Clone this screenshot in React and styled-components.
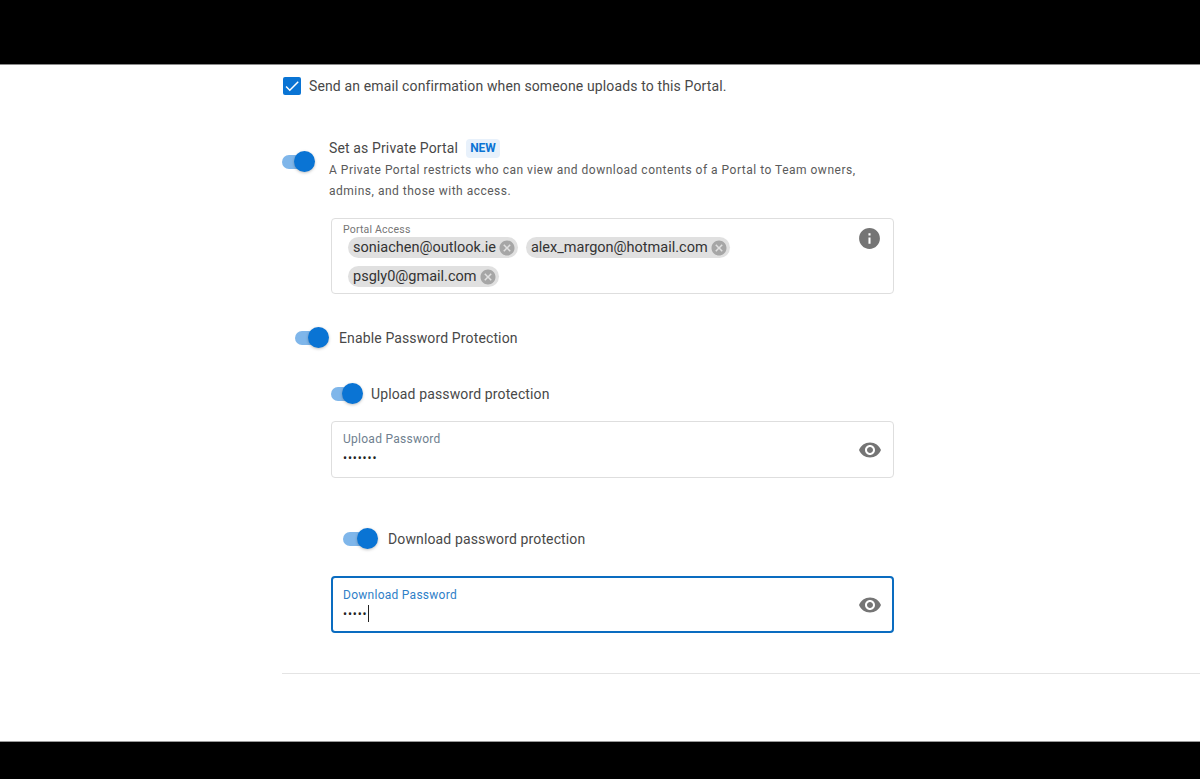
import React from "react";
import styled, { createGlobalStyle } from "styled-components";

const GlobalStyle = createGlobalStyle`
  html, body {
    margin: 0;
    padding: 0;
    background: #000;
    font-family: Roboto, "Liberation Sans", sans-serif;
    overflow: hidden;
  }
`;

const eyePath =
  "M12 4.5C7 4.5 2.73 7.61 1 12c1.73 4.39 6 7.5 11 7.5s9.27-3.11 11-7.5c-1.73-4.39-6-7.5-11-7.5zM12 17c-2.76 0-5-2.24-5-5s2.24-5 5-5 5 2.24 5 5-2.24 5-5 5zm0-8c-1.66 0-3 1.34-3 3s1.34 3 3 3 3-1.34 3-3-1.34-3-3-3z";
const infoPath =
  "M12 2C6.48 2 2 6.48 2 12s4.48 10 10 10 10-4.48 10-10S17.52 2 12 2zm1 15h-2v-6h2v6zm0-8h-2V7h2v2z";
const cancelPath =
  "M12 2C6.47 2 2 6.47 2 12s4.47 10 10 10 10-4.47 10-10S17.53 2 12 2zm5 13.59L15.59 17 12 13.41 8.41 17 7 15.59 10.59 12 7 8.41 8.41 7 12 10.59 15.59 7 17 8.41 13.41 12 17 15.59z";

const Icon = ({ d, size, color }) => (
  <svg width={size} height={size} viewBox="0 0 24 24" fill={color}>
    <path d={d} fillRule="evenodd" />
  </svg>
);

const Toggle = ({ className, width }) => (
  <ToggleBox className={className} $width={width}>
    <Track />
    <Knob />
  </ToggleBox>
);

const Chip = ({ children }) => (
  <ChipBox>
    {children}
    <ChipClose>
      <Icon d={cancelPath} size={18} color="#a6a6a6" />
    </ChipClose>
  </ChipBox>
);

const PasswordField = ({ label, dots, focused }) => (
  <FieldBox $focused={focused}>
    <FieldText $focused={focused}>
      <FieldLabel $focused={focused}>{label}</FieldLabel>
      <Dots>
        {dots}
        {focused && <Caret />}
      </Dots>
    </FieldText>
    <Icon d={eyePath} size={24} color="#757575" />
  </FieldBox>
);

export default function App() {
  return (
    <>
      <GlobalStyle />
      <Screen>
        <TopBar />
        <Page>
          <Column>
            <CheckRow>
              <CheckBox>
                <Icon d="M9 16.17 4.83 12l-1.42 1.41L9 19 21 7l-1.41-1.41z" size={18} color="#fff" />
              </CheckBox>
              <RowText>Send an email confirmation when someone uploads to this Portal.</RowText>
            </CheckRow>

            <PrivateRow>
              <PrivateToggle width={33} />
              <PrivateText>
                <TitleLine>
                  <RowText>Set as Private Portal</RowText>
                  <Badge>NEW</Badge>
                </TitleLine>
                <Description>
                  A Private Portal restricts who can view and download contents of a Portal to Team owners,
                  <br />
                  admins, and those with access.
                </Description>
              </PrivateText>
            </PrivateRow>

            <FieldColumn>
              <AccessBox>
                <AccessLabel>Portal Access</AccessLabel>
                <ChipList>
                  <Chip>soniachen@outlook.ie</Chip>
                  <Chip>alex_margon@hotmail.com</Chip>
                  <Chip>psgly0@gmail.com</Chip>
                </ChipList>
                <InfoSpot>
                  <Icon d={infoPath} size={25} color="#757575" />
                </InfoSpot>
              </AccessBox>
            </FieldColumn>

            <EnableRow>
              <Toggle width={34} />
              <RowText>Enable Password Protection</RowText>
            </EnableRow>

            <UploadRow>
              <Toggle width={32} />
              <RowText>Upload password protection</RowText>
            </UploadRow>
            <FieldColumn>
              <PasswordField label="Upload Password" dots="•••••••" />
            </FieldColumn>

            <DownloadRow>
              <Toggle width={35} />
              <RowText>Download password protection</RowText>
            </DownloadRow>
            <FieldColumn>
              <PasswordField label="Download Password" dots="•••••" focused />
            </FieldColumn>

            <Divider />
          </Column>
        </Page>
      </Screen>
    </>
  );
}

const Screen = styled.div`
  height: 779px;
  display: flex;
  flex-direction: column;
  background: #000;
`;

const TopBar = styled.div`
  height: 65px;
  flex: none;
  background: #000;
  border-bottom: 1px solid #8a8a8a;
  box-sizing: border-box;
`;

const Page = styled.main`
  height: 677px;
  flex: none;
  background: #fff;
  overflow: hidden;
  border-bottom: 1px solid #9a9a9a;
  box-sizing: border-box;
`;

const Column = styled.div`
  margin-left: 282px;
  display: flex;
  flex-direction: column;
`;

const RowText = styled.span`
  font-size: 14px;
  line-height: 20px;
  letter-spacing: 0.13px;
  color: #484848;
`;

const CheckRow = styled.div`
  display: flex;
  align-items: center;
  gap: 8px;
  height: 18px;
  margin-top: 12px;
  padding-left: 1px;
`;

const CheckBox = styled.span`
  width: 18px;
  height: 18px;
  flex: none;
  display: flex;
  align-items: center;
  justify-content: center;
  background: #0a74d4;
  border-radius: 2px;
`;

const ToggleBox = styled.span`
  display: block;
  position: relative;
  width: ${(p) => p.$width}px;
  height: 22px;
  flex: none;
`;

const Track = styled.span`
  position: absolute;
  left: 0;
  right: 4px;
  top: 4px;
  height: 14px;
  border-radius: 7px;
  background: #7fb6ea;
`;

const Knob = styled.span`
  position: absolute;
  right: 0;
  top: 0;
  width: 21px;
  height: 21px;
  border-radius: 50%;
  background: #0a74d4;
  box-shadow: 0 1px 3px rgba(0, 0, 0, 0.25);
`;

const PrivateRow = styled.div`
  display: flex;
  align-items: flex-start;
  margin-top: 43px;
`;

const PrivateToggle = styled(Toggle)`
  margin-top: 13px;
  margin-right: 14px;
`;

const PrivateText = styled.div`
  display: flex;
  flex-direction: column;
`;

const TitleLine = styled.div`
  display: flex;
  align-items: center;
  gap: 8px;
  height: 20px;
`;

const Badge = styled.span`
  width: 34px;
  height: 19px;
  display: flex;
  align-items: center;
  justify-content: center;
  border-radius: 4px;
  background: #e8f1fb;
  color: #0a74d4;
  font-size: 12px;
  font-weight: 700;
`;

const Description = styled.p`
  margin: 2px 0 0;
  font-size: 12px;
  line-height: 21px;
  letter-spacing: 0.5px;
  color: #5a5a5a;
`;

const FieldColumn = styled.div`
  margin-left: 49px;
  width: 563px;
`;

const AccessBox = styled.div`
  position: relative;
  box-sizing: border-box;
  height: 76px;
  margin-top: 16px;
  padding: 5px 11px 0;
  border: 1px solid #dedede;
  border-radius: 4px;
`;

const AccessLabel = styled.div`
  font-size: 10.5px;
  line-height: 12px;
  letter-spacing: 0.2px;
  color: #757575;
`;

const ChipList = styled.div`
  display: flex;
  flex-wrap: wrap;
  gap: 8px;
  margin-top: 1px;
  padding-left: 5px;
  width: 440px;
`;

const ChipBox = styled.span`
  display: inline-flex;
  align-items: center;
  height: 21px;
  padding: 0 2px 0 5px;
  border-radius: 11px;
  background: #e0e0e0;
  font-size: 14.5px;
  letter-spacing: 0;
  color: #333;
`;

const ChipClose = styled.span`
  display: flex;
  margin-left: 2px;
`;

const InfoSpot = styled.span`
  position: absolute;
  top: 7px;
  right: 11px;
  display: flex;
`;

const EnableRow = styled.div`
  display: flex;
  align-items: center;
  gap: 10px;
  margin-top: 33px;
  margin-left: 13px;
`;

const UploadRow = styled.div`
  display: flex;
  align-items: center;
  gap: 8px;
  margin-top: 34px;
  margin-left: 49px;
`;

const DownloadRow = styled.div`
  display: flex;
  align-items: center;
  gap: 10px;
  margin-top: 50px;
  margin-left: 61px;
`;

const FieldBox = styled.div`
  box-sizing: border-box;
  height: 57px;
  margin-top: ${(p) => (p.$focused ? "26px" : "16px")};
  padding: 0 ${(p) => (p.$focused ? "10px" : "11px")};
  display: flex;
  align-items: center;
  justify-content: space-between;
  border: ${(p) => (p.$focused ? "2px solid #0a6cc0" : "1px solid #dedede")};
  border-radius: 4px;
`;

const FieldText = styled.div`
  display: flex;
  flex-direction: column;
  padding-top: ${(p) => (p.$focused ? "2px" : "0")};
`;

const FieldLabel = styled.div`
  font-size: 12px;
  line-height: 16px;
  letter-spacing: 0.27px;
  color: ${(p) => (p.$focused ? "#2f80c8" : "#6f7f8f")};
`;

const Dots = styled.div`
  display: flex;
  align-items: center;
  height: 22px;
  font-size: 12px;
  letter-spacing: 0.85px;
  color: #222;
`;

const Caret = styled.span`
  width: 1px;
  height: 17px;
  background: #222;
`;

const Divider = styled.hr`
  width: 100%;
  margin: 40px 0 0;
  border: 0;
  border-top: 1px solid #e4e4e4;
`;
